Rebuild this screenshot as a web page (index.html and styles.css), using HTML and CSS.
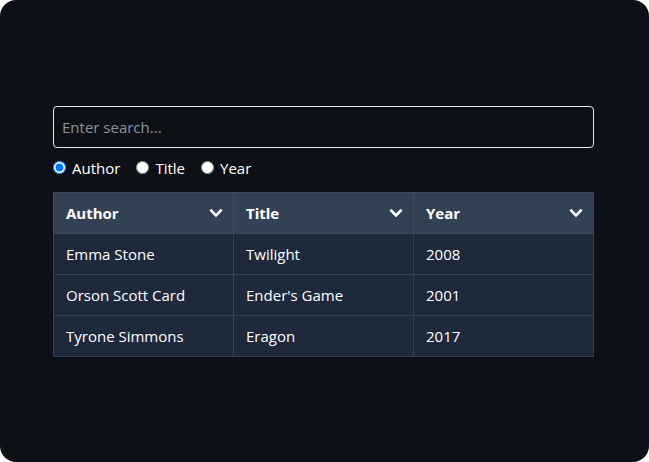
FILE: index.html
```html
<!DOCTYPE html>
<html>
<head>
<meta charset="utf-8">
<link rel="stylesheet" href="styles.css">
</head>
<body>
<div class="panel">
  <div class="content">
    <input class="search" type="text" placeholder="Enter search...">
    <div class="radios">
      <label class="opt"><input type="radio" name="f" checked><span>Author</span></label>
      <label class="opt"><input type="radio" name="f"><span>Title</span></label>
      <label class="opt"><input type="radio" name="f"><span>Year</span></label>
    </div>
    <table class="grid">
      <thead>
        <tr>
          <th><div class="th"><span>Author</span><svg class="chev" viewBox="0 0 24 24"><path d="M4 8l8 8 8-8"/></svg></div></th>
          <th><div class="th"><span>Title</span><svg class="chev" viewBox="0 0 24 24"><path d="M4 8l8 8 8-8"/></svg></div></th>
          <th><div class="th"><span>Year</span><svg class="chev" viewBox="0 0 24 24"><path d="M4 8l8 8 8-8"/></svg></div></th>
        </tr>
      </thead>
      <tbody>
        <tr><td>Emma Stone</td><td>Twilight</td><td>2008</td></tr>
        <tr><td>Orson Scott Card</td><td>Ender's Game</td><td>2001</td></tr>
        <tr><td>Tyrone Simmons</td><td>Eragon</td><td>2017</td></tr>
      </tbody>
    </table>
  </div>
</div>
</body>
</html>
```
FILE: styles.css
```css
html, body { margin: 0; padding: 0; background: #ffffff; }
body { font-family: "Open Sans", "Noto Sans", sans-serif; font-size: 15px; color: #ffffff; }
.panel {
  height: 462px;
  background: #0d1117;
  border-radius: 16px;
  display: flex;
  align-items: center;
  padding: 0 55px 0 53px;
  box-sizing: border-box;
}
.content { width: 541px; display: flex; flex-direction: column; }
.search {
  box-sizing: border-box;
  height: 42px;
  width: 100%;
  margin: 0;
  background: transparent;
  border: 1px solid #e5e7eb;
  border-radius: 4px;
  padding: 0 8px;
  font-family: inherit;
  font-size: 15px;
  color: #ffffff;
  outline: none;
}
.search::placeholder { color: #8b949e; }
.radios { display: flex; align-items: center; height: 20px; margin: 10px 0 14px; gap: 16px; }
.opt { display: flex; align-items: center; gap: 6px; }
.opt input { margin: 0; width: 13px; height: 13px; }
.grid { border-collapse: collapse; width: 541px; table-layout: fixed; }
.grid th, .grid td {
  border: 1px solid #334155;
  height: 41px;
  box-sizing: border-box;
  padding: 0 11px 0 12px;
  text-align: left;
}
.grid th { background: #334155; font-weight: 700; border-color: #3b4a5e; padding-right: 10px; }
.grid td { background: #1e293b; }
.th { display: flex; align-items: center; justify-content: space-between; }
.chev { width: 14px; height: 14px; fill: none; stroke: #ffffff; stroke-width: 4.5; stroke-linecap: square; stroke-linejoin: miter; }
```
